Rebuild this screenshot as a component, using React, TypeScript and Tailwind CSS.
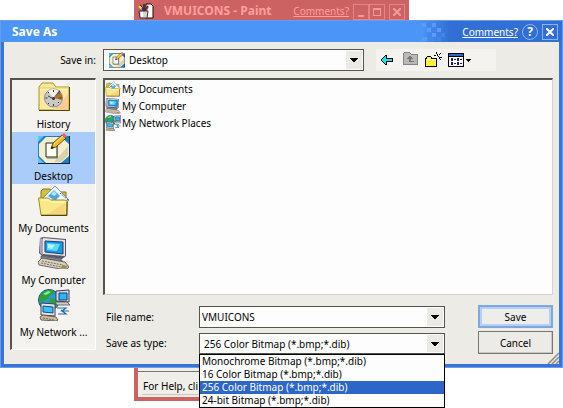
import React, { useState } from "react";

type IconProps = { className?: string };

function HistoryIcon({ className = "size-8" }: IconProps) {
  return (
    <svg viewBox="0 0 32 32" className={className} aria-hidden="true">
      <path d="M1 29V6l3-4h11l3 4h13v23z" fill="#fbe8a0" stroke="#a39a17" />
      <path d="M2 8h28" stroke="#fffbd0" />
      <path d="M2 7h28" stroke="#e4d45c" />
      <path d="M31.500 6v23.500H1" stroke="#4c4708" fill="none" />
      <path d="M16 29l14-16v16z" fill="#fccb94" />
      <circle cx="15.500" cy="17" r="9" fill="#c9c9c6" stroke="#8b8b95" />
      <path d="M15.500 17L22 11a9 9 0 0 1 2 8z" fill="#b0741f" />
      <path d="M15.500 17L10 10a9 9 0 0 1 11 0z" fill="#f2f2ef" />
      <path d="M15.500 17l7-6-1-2z" fill="#555560" />
      <path d="M15.500 9v2M15.500 23v2M7.500 17h2M21.500 17h2M10 11l1 1M21 22l-1-1M10 23l1-1" stroke="#333" />
      <path d="M10 15l6 3" fill="none" stroke="#44444f" />
      <circle cx="15.500" cy="17.500" r="1.500" fill="#33333d" />
    </svg>
  );
}

function DesktopIcon({ className = "size-8" }: IconProps) {
  return (
    <svg viewBox="0 0 32 32" className={className} aria-hidden="true">
      <path d="M0 3h32v28H0z" fill="#0b2640" />
      <path d="M0 3h31v27H0z" fill="#1c7fc0" />
      <path d="M0 3h6L0 9zM0 30v-6l6 6z" fill="#58c8f4" />
      <path d="M8 4h15l8 7v12l-8 7H8l-7-7V11z" fill="#f3efcd" />
      <path d="M23 29l7-7v-9L16 29z" fill="#d5d2b0" />
      <path d="M8 10h11v14H8z" fill="#fffef3" stroke="#252525" />
      <path d="M19.500 11v14H9" stroke="#74745f" fill="none" />
      <path d="M13 15.500L15 10 24 2l4 3-10 9z" fill="#f6b82b" stroke="#483000" strokeWidth=".8" />
      <path d="M24 2l2-2 3 3-2 2z" fill="#ee6655" />
      <path d="M16 11l9-8" stroke="#ffe68b" />
      <path d="M13 16l1-3 2 2z" fill="#111" />
    </svg>
  );
}

function DocumentsIcon({ className = "size-8" }: IconProps) {
  return (
    <svg viewBox="0 0 32 32" className={className} aria-hidden="true">
      <path d="M3 15V6l2-2h7l2 3h14v12z" fill="#d3c13b" stroke="#827813" />
      <path d="M5 13L17 1l14 14-7 8z" fill="#f9fcff" stroke="#7c91b8" />
      <path d="M10 11l6-6 6 6-5 5z" fill="#4ba7e5" />
      <path d="M13 9l3-3 3 3-3 2z" fill="#a8edff" />
      <path d="M22 8l8 7-4 4" fill="none" stroke="#425f9b" strokeDasharray="2 1" />
      <path d="M0.500 13h10l2 2h14l3 1-1 14H3z" fill="#f9e887" stroke="#9a8d13" />
      <path d="M3 15h8l2 2h14" fill="none" stroke="#fffbd6" />
      <path d="M10 29l17-11v11z" fill="#f4c77c" opacity=".6" />
      <path d="M3 30.500h26V17" stroke="#4b4509" fill="none" />
    </svg>
  );
}

function ComputerIcon({ className = "size-8" }: IconProps) {
  return (
    <svg viewBox="0 0 32 32" className={className} aria-hidden="true">
      <path d="M2 1l3-1 23 2v17l-4 3L4 19 1 16z" fill="#585873" />
      <path d="M2 1l3 1v16l-3-2z" fill="#a6a6c4" />
      <path d="M5 1l22 2v16L5 17z" fill="#e9e6d9" />
      <path d="M7 4l18 1v12L7 15z" fill="#159ce3" stroke="#223b77" />
      <path d="M9 6l13 1-3 7-10-1z" fill="#62d8ff" />
      <path d="M10 7l7 1-3 4-4-1z" fill="#b3f6ff" />
      <path d="M3 19l20 3 2 3-22-2z" fill="#8c8a86" stroke="#41414f" strokeWidth=".6" />
      <path d="M0 25l4-4 23 4 4 5-2 2h-7L1 28z" fill="#d6d0bc" stroke="#4e4858" strokeWidth=".8" />
      <path d="M4 24l21 4M3 26l20 4" stroke="#76705d" strokeDasharray="2 1" />
      <path d="M24 28l6 1-2 2h-5z" fill="#a08a4b" />
    </svg>
  );
}

function NetworkIcon({ className = "size-8" }: IconProps) {
  return (
    <svg viewBox="0 0 32 32" className={className} aria-hidden="true">
      <circle cx="11" cy="11" r="10.500" fill="#2a9ad7" stroke="#17586d" />
      <path d="M2 6l5-4 7-1 3 4-5 1-2 4-4 2-5 2zM12 9l5 1 2 6-5 3-3-4zM2 15l4 1 1 5-4-3z" fill="#2aa43a" />
      <path d="M5 5l5-3 3 1-5 3z" fill="#9be796" />
      <path d="M18 2l13-1v12l-13-1z" fill="#d7dae8" stroke="#363a5c" />
      <path d="M21 4h8v7h-8z" fill="#2fb5ef" stroke="#1b3b78" />
      <path d="M17 13h12l3 3H19z" fill="#d2cdb9" stroke="#55505c" strokeWidth=".8" />
      <path d="M19 19h9l-4 3h7M20 25h8l-5-4" fill="none" stroke="#2669a4" strokeWidth="1.200" />
      <path d="M3 14l14 1v12L3 26z" fill="#e7e6e5" stroke="#393d61" />
      <path d="M5 17l10 1v6L5 23z" fill="#36c3f8" stroke="#184783" />
      <path d="M2 28l3-2 13 2 2 3-2 1L3 31z" fill="#cbbf9b" stroke="#4e4553" strokeWidth=".8" />
      <path d="M5 29l11 2" stroke="#6c624c" strokeDasharray="2 1" />
    </svg>
  );
}

function PaintIcon() {
  return (
    <svg viewBox="0 0 16 16" className="size-4 shrink-0" aria-hidden="true">
      <path d="M8 1h5l2 2v12H8z" fill="#fff" stroke="#111" />
      <path d="M2 2l4 6M6 1v6M10 3L7 8" stroke="#222" strokeWidth="1.500" />
      <path d="M1 3l3 3" stroke="#ffe13b" strokeWidth="2" />
      <path d="M4 5l2 3" stroke="#2036c9" strokeWidth="1.500" />
      <path d="M10 4L8 8" stroke="#d53822" strokeWidth="1.500" />
      <path d="M1 8h9l-1 7H2z" fill="#d6d6d0" stroke="#333" />
      <path d="M4 9v5" stroke="#fff" strokeWidth="2" />
    </svg>
  );
}

function BackIcon() {
  return (
    <svg viewBox="0 0 14 12" className="h-3 w-3.5" shapeRendering="crispEdges" aria-hidden="true">
      <path d="M1 6V5h1V4h1V3h1V2h1V1h2v3h6v4H7v3H5v-1H4V9H3V8H2V7H1z" />
      <path d="M2 6V5h1V4h1V3h1V2h1v3h6v2H6v3H5V9H4V8H3V7H2z" fill="#12e8ee" />
    </svg>
  );
}

function UpFolderIcon() {
  return (
    <svg viewBox="0 0 16 16" className="mb-1 size-4" shapeRendering="crispEdges" aria-hidden="true">
      <path d="M1 14V4l2-2h4l2 2h6v10z" fill="#b9b9b7" stroke="#858585" />
      <path d="M7 6h2v1h1v1h1v1H9v2h3v1H7V9H5V8h1V7h1z" fill="#777" />
    </svg>
  );
}

function NewFolderIcon() {
  return (
    <svg viewBox="0 0 17 16" className="h-4 w-[17px]" shapeRendering="crispEdges" aria-hidden="true">
      <path d="M0 15V6h1V5h1V4h4v1h1v1h5v9z" />
      <path d="M1 14V7h1V5h4v2h5v7z" fill="#fff03c" />
      <path d="M1 7h10v1H1z" fill="#fffdb5" />
      <path d="M11 0h1v2h-1zM12 2h1v2h-1zM15 1h1v1h-1zM14 2h1v1h-1zM14 5h3v1h-3zM13 4h1v1h-1zM15 7h1v1h-1zM14 6h1v1h-1zM9 3h2v1H9z" />
    </svg>
  );
}

function ViewsIcon() {
  return (
    <svg viewBox="0 0 24 16" className="h-4 w-6" shapeRendering="crispEdges" aria-hidden="true">
      <path d="M0 1h16v14H0z" />
      <path d="M1 2h14v2H1z" fill="#236ad0" />
      <path d="M1 5h14v9H1z" fill="#fff" />
      <path d="M3 6h2v3H3zM9 6h2v3H9zM3 10h2v3H3zM9 10h2v3H9z" fill="#17178b" />
      <path d="M6 7h2v1H6zM12 7h2v1h-2zM6 11h2v1H6zM12 11h2v1h-2z" fill="#222" />
      <path d="M18 7h5v1h-1v1h-1v1h-1V9h-1V8h-1z" />
    </svg>
  );
}

function CaretBox() {
  return (
    <span className="pointer-events-none absolute inset-y-0.5 right-0.5 flex w-4 items-center justify-center bg-[#ebeae4]">
      <svg viewBox="0 0 8 4" className="h-1 w-2" shapeRendering="crispEdges" aria-hidden="true">
        <path d="M0 0h8v1H7v1H6v1H5v1H3V3H2V2H1V1H0z" />
      </svg>
    </span>
  );
}

const places = [
  { label: "History", Icon: HistoryIcon },
  { label: "Desktop", Icon: DesktopIcon },
  { label: "My Documents", Icon: DocumentsIcon },
  { label: "My Computer", Icon: ComputerIcon },
  { label: "My Network ...", Icon: NetworkIcon },
];

const files = [
  { label: "My Documents", Icon: DocumentsIcon },
  { label: "My Computer", Icon: ComputerIcon },
  { label: "My Network Places", Icon: NetworkIcon },
];

const fileTypes = [
  "Monochrome Bitmap (*.bmp;*.dib)",
  "16 Color Bitmap (*.bmp;*.dib)",
  "256 Color Bitmap (*.bmp;*.dib)",
  "24-bit Bitmap (*.bmp;*.dib)",
];

const field = "block w-full appearance-none border border-[#55554f] bg-[#fdfdfd] outline-none";
const titleText = "text-xs font-bold";

function PaintWindow() {
  return (
    <section className="absolute top-0 left-[134px] flex h-[401px] w-[275px] flex-col border-x-4 border-b-4 border-[#cc6262] bg-[#cc6262]">
      <header className="flex h-5 shrink-0 items-center pt-px text-[#ff9f9f]">
        <PaintIcon />
        <h2 className={`ml-2.5 ${titleText}`}>VMUICONS - Paint</h2>
        <a href="#comments" className="mr-1 ml-auto underline">Comments?</a>
        <div className="flex pt-0.5">
          <button aria-label="Minimize" className="flex size-4 items-end justify-center border border-[#e58585] pb-0.5">
            <span className="h-0.5 w-1.5 bg-[#f39a9a]" />
          </button>
          <button aria-label="Maximize" className="flex size-4 items-center justify-center border border-[#e58585]">
            <span className="size-2 border border-t-2 border-[#f39a9a]" />
          </button>
          <button aria-label="Close" className="ml-1 flex size-4 items-center justify-center border border-[#e58585]">
            <svg viewBox="0 0 8 8" className="size-2"><path d="M0 0l8 8M8 0L0 8" stroke="#f39a9a" strokeWidth="2" /></svg>
          </button>
        </div>
      </header>
      <div className="flex-1 bg-[#efeee9]" />
      <footer className="border-t border-[#77776f] bg-[#efeee9] px-1 pt-1.5 pb-0.5">
        <p className="border-b border-[#c9c8c2] pl-px leading-4">For Help, cli</p>
      </footer>
    </section>
  );
}

export default function App() {
  const [place, setPlace] = useState("Desktop");
  const [type, setType] = useState(fileTypes[2]);
  const [name, setName] = useState("VMUICONS");

  return (
    <main className="relative min-h-screen overflow-hidden bg-white pt-5 font-['Noto_Sans','Open_Sans',sans-serif] text-[10px] leading-4 text-black">
      <PaintWindow />
      <section className="relative border border-[#6a9bee] bg-[#3a74d6] pb-[3px]" aria-labelledby="title">
        <header className="flex h-[21px] items-center bg-linear-to-r from-[#4b94f8] from-75% to-[#326fd5] to-80% pr-1 pl-[11px] text-white">
          <h1 id="title" className={titleText}>Save As</h1>
          <svg viewBox="0 0 24 20" className="mr-4 ml-auto h-5 w-6" shapeRendering="crispEdges" aria-hidden="true">
            <path d="M0 1h4v4H0zM10 1h4v4h-4zM5 6h4v4H5zM15 6h4v4h-4zM0 15h5v4H0zM10 11h4v4h-4z" fill="#5a9bf8" />
            <path d="M5 1h4v4H5zM10 6h4v4h-4zM5 11h4v4H5zM15 15h4v4h-4zM19 11h4v4h-4z" fill="#4385e8" />
          </svg>
          <a href="#comments" className="underline">Comments?</a>
          <button aria-label="Help" className="ml-1 flex size-4 items-center justify-center rounded-full border border-[#8bb4f4] text-xs font-bold">?</button>
          <button aria-label="Close" className="ml-1 flex size-4 items-center justify-center border border-[#8bb4f4]">
            <svg viewBox="0 0 8 8" className="size-2"><path d="M0 0l8 8M8 0L0 8" stroke="#fff" strokeWidth="2" /></svg>
          </button>
        </header>

        <div className="relative mx-[3px] bg-[#ecebe5] px-1.5 pt-[7px] pb-2.5">
          <div className="flex items-center">
            <label htmlFor="folder" className="w-[86px] text-right">Save in:</label>
            <div className="relative ml-[7px] max-w-[261px] flex-1">
              <select id="folder" className={`${field} h-[22px] pl-[25px]`} defaultValue="Desktop">
                <option>Desktop</option>
              </select>
              <DesktopIcon className="pointer-events-none absolute top-[3px] left-1.5 size-4" />
              <CaretBox />
            </div>
            <div className="ml-3 flex h-[22px] w-[120px] items-center bg-[#f4f3ef] pl-1">
              <button aria-label="Back"><BackIcon /></button>
              <button aria-label="Up one level" disabled className="ml-2"><UpFolderIcon /></button>
              <button aria-label="New folder" className="ml-[7px]"><NewFolderIcon /></button>
              <button aria-label="Views" className="ml-1.5"><ViewsIcon /></button>
            </div>
          </div>

          <div className="mt-[7px] flex gap-[7px]">
            <nav className="h-[272px] w-[86px] shrink-0 border-t-2 border-r border-b border-l-2 border-t-[#55554f] border-r-white border-b-white border-l-[#55554f] bg-[#f4f3ef]">
              {places.map(({ label, Icon }) => (
                <button
                  key={label}
                  aria-pressed={place === label}
                  onClick={() => setPlace(label)}
                  className={`flex h-[52px] w-full flex-col items-center justify-between pt-px whitespace-nowrap ${place === label ? "bg-[#aaccfa]" : ""}`}
                >
                  <Icon />
                  <span>{label}</span>
                </button>
              ))}
            </nav>

            <div className="flex min-w-0 flex-1 flex-col">
              <ul className="h-[217px] border-t-2 border-r border-b border-l-2 border-t-[#55554f] border-r-[#d4d3cd] border-b-[#d4d3cd] border-l-[#55554f] bg-[#fdfdfd]">
                {files.map(({ label, Icon }) => (
                  <li key={label} className="flex h-[17px] items-center gap-px">
                    <Icon className="size-4" />
                    {label}
                  </li>
                ))}
              </ul>

              <form className="mt-2.5 flex flex-col gap-[3px]" onSubmit={(e) => e.preventDefault()}>
                <div className="flex items-center">
                  <label htmlFor="name" className="w-24 pl-[3px]">File name:</label>
                  <div className="relative flex-1">
                    <input id="name" className={`${field} h-[22px] pl-0.5`} value={name} onChange={(e) => setName(e.target.value)} />
                    <CaretBox />
                  </div>
                  <button type="submit" className="ml-[33px] h-[23px] w-[75px] border-2 border-[#7fa6dd] bg-[#edeeec] outline-2 -outline-offset-4 outline-[#b5d0f6]">Save</button>
                </div>
                <div className="flex items-center">
                  <label htmlFor="type" className="w-24 pl-[3px]">Save as type:</label>
                  <div className="relative flex-1 self-end">
                    <select id="type" className={`${field} h-[21px] pl-1`} value={type} onChange={(e) => setType(e.target.value)}>
                      {fileTypes.map((t) => <option key={t}>{t}</option>)}
                    </select>
                    <CaretBox />
                    <ul role="listbox" aria-label="Save as type" className="absolute inset-x-0 top-full z-10 border border-black bg-[#fdfdfd] leading-[13px]">
                      {fileTypes.map((t) => (
                        <li
                          key={t}
                          role="option"
                          aria-selected={t === type}
                          onClick={() => setType(t)}
                          className={`pl-0.5 ${t === type ? "bg-[#2c66c8] text-white" : ""}`}
                        >
                          {t}
                        </li>
                      ))}
                    </ul>
                  </div>
                  <button type="button" className="ml-[33px] h-[23px] w-[75px] border border-[#77776f] bg-[#ecebe7] shadow-[inset_-1px_-1px_0_#c8c7c1]">Cancel</button>
                </div>
              </form>
            </div>
          </div>
          <svg viewBox="0 0 12 12" className="absolute right-0 bottom-0 size-3" aria-hidden="true">
            <path d="M1 12L12 1M5 12l7-7M9 12l3-3" stroke="#8b8b84" strokeWidth="1.500" />
          </svg>
        </div>
      </section>
    </main>
  );
}
